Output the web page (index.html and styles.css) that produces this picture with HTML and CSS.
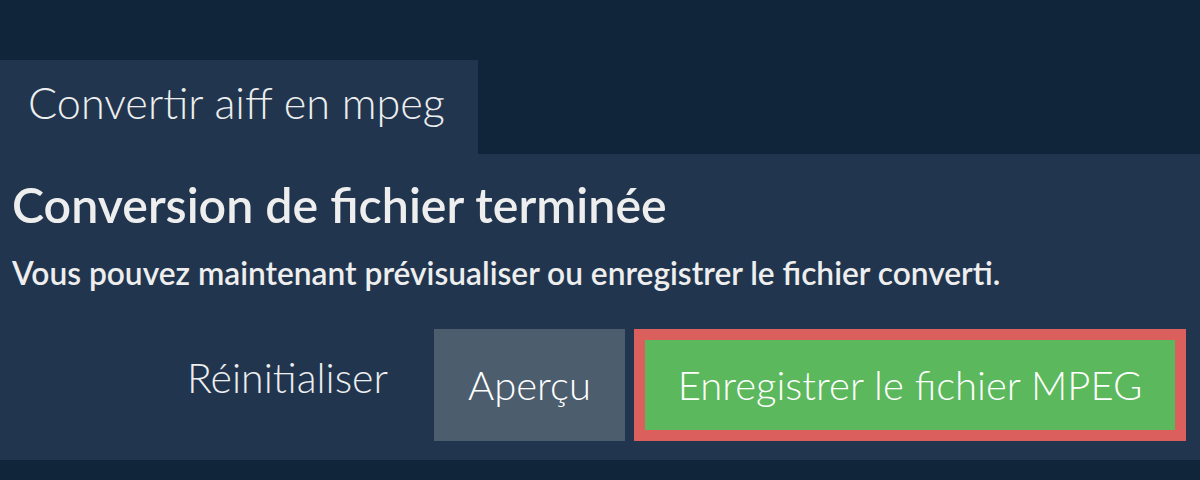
FILE: index.html
```html
<!DOCTYPE html>
<html lang="fr">
<head>
<meta charset="utf-8">
<link rel="stylesheet" href="styles.css">
</head>
<body>
<div class="page">
  <div class="tabs">
    <div class="tab">Convertir aiff en mpeg</div>
  </div>
  <section class="panel">
    <h1 class="title">Conversion de fichier terminée</h1>
    <p class="desc">Vous pouvez maintenant prévisualiser ou enregistrer le fichier converti.</p>
    <div class="actions">
      <button class="btn btn-link">Réinitialiser</button>
      <button class="btn btn-grey">Aperçu</button>
      <button class="btn btn-green">Enregistrer le fichier MPEG</button>
    </div>
  </section>
</div>
</body>
</html>
```
FILE: styles.css
```css
html, body {
  margin: 0;
  padding: 0;
  background: #10243a;
  font-family: Lato, "Open Sans", sans-serif;
  color: #eeeeee;
}
.page {
  width: 1200px;
  height: 480px;
  padding-top: 60px;
  box-sizing: border-box;
}
.tabs {
  display: flex;
}
.tab {
  width: 478px;
  height: 94px;
  box-sizing: border-box;
  background: #21364e;
  padding: 16px 0 0 28px;
  font-size: 43.2px;
  font-weight: 300;
  line-height: 52px;
}
.panel {
  background: #21364e;
  height: 306px;
  box-sizing: border-box;
  padding: 21px 14px 0 12px;
}
.title {
  margin: 0;
  font-size: 48.3px;
  font-weight: 600;
  line-height: 58px;
}
.desc {
  margin: 22px 0 0;
  font-size: 31.7px;
  font-weight: 600;
  line-height: 36px;
}
.actions {
  display: flex;
  justify-content: flex-end;
  align-items: flex-start;
  gap: 9px;
  margin-top: 38px;
}
.btn {
  font-family: inherit;
  border: 0;
  margin: 0;
  color: #ffffff;
  font-size: 40px;
  font-weight: 300;
  height: 112px;
  box-sizing: border-box;
  cursor: pointer;
}
.btn-link {
  background: transparent;
  color: #eeeeee;
  font-size: 41px;
  padding: 0 37px 16px;
}
.btn-grey {
  background: #4c5d6e;
  width: 191px;
}
.btn-green {
  background: #5cb85c;
  border: 11px solid #db5f5c;
  width: 552px;
}
```
